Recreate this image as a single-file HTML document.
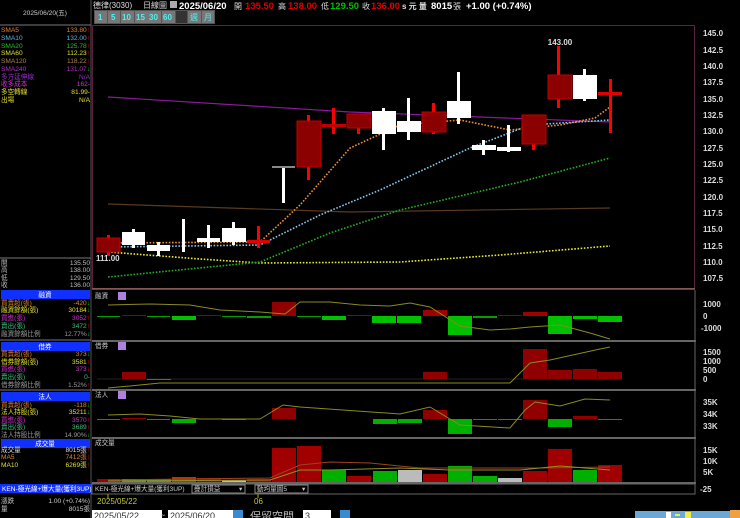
<!DOCTYPE html>
<html><head><meta charset="utf-8"><style>
html,body{margin:0;padding:0;background:#000;width:740px;height:518px;overflow:hidden}
svg{display:block}
text{font-family:"Liberation Sans","Noto Sans CJK TC",sans-serif}
.s{font-size:6.6px}
.a{font-size:8px;fill:#ddd;font-weight:bold}
</style></head><body>
<svg width="740" height="518" viewBox="0 0 740 518" xmlns="http://www.w3.org/2000/svg">
<rect width="740" height="518" fill="#000"/>
<g font-weight="bold" font-size="8">
<text x="93" y="8" fill="#ddd" font-weight="normal">德律(3030)</text>
<text x="143" y="8" fill="#ddd" font-weight="normal">日線圖</text>
<rect x="170" y="1" width="7" height="7" fill="#aaa"/>
<text x="179" y="9" fill="#fff" font-size="9.5">2025/06/20</text>
<text x="234" y="9" fill="#ddd" font-weight="normal">開</text>
<text x="245" y="9" fill="#e00000" font-size="9.5">135.50</text>
<text x="278" y="9" fill="#ddd" font-weight="normal">高</text>
<text x="288" y="9" fill="#e00000" font-size="9.5">138.00</text>
<text x="321" y="9" fill="#ddd" font-weight="normal">低</text>
<text x="330" y="9" fill="#00c000" font-size="9.5">129.50</text>
<text x="362" y="9" fill="#ddd" font-weight="normal">收</text>
<text x="371" y="9" fill="#e00000" font-size="9.5">136.00</text>
<text x="402" y="9" fill="#ddd">s 元  量</text>
<text x="431" y="9" fill="#fff" font-size="9.5">8015</text>
<text x="453" y="9" fill="#ddd" font-weight="normal">張</text>
<text x="466" y="9" fill="#fff" font-size="9.5">+1.00 (+0.74%)</text>
</g>
<rect x="94" y="10" width="121" height="14" fill="#555"/>
<g font-size="8" fill="#5ee" font-weight="bold">
<rect x="95" y="11" width="12" height="12" fill="#777"/><text x="98" y="20">1</text>
<rect x="108" y="11" width="12" height="12" fill="#777"/><text x="111" y="20">5</text>
<rect x="121" y="11" width="13" height="12" fill="#777"/><text x="122" y="20">10</text>
<rect x="135" y="11" width="13" height="12" fill="#777"/><text x="136" y="20">15</text>
<rect x="148" y="11" width="13" height="12" fill="#777"/><text x="149" y="20">30</text>
<rect x="162" y="11" width="13" height="12" fill="#777"/><text x="163" y="20">60</text>
<rect x="176" y="11" width="11" height="12" fill="#333"/>
<rect x="188" y="11" width="13" height="12" fill="#777"/><text x="190" y="20" font-weight="normal">週</text>
<rect x="202" y="11" width="12" height="12" fill="#777"/><text x="204" y="20" font-weight="normal">月</text>
</g>
<line x1="91" y1="0" x2="91" y2="518" stroke="#555"/>
<text x="45" y="15" class="s" fill="#ccc" text-anchor="middle">2025/06/20(五)</text>
<line x1="0" y1="25" x2="91" y2="25" stroke="#777"/>
<g class="s">
<text x="1" y="32" fill="#e08030">SMA5</text><text x="90" y="32" fill="#e08030" text-anchor="end">133.80<tspan fill="#f00">↑</tspan></text>
<text x="1" y="40" fill="#60b0e0">SMA10</text><text x="90" y="40" fill="#60b0e0" text-anchor="end">132.00<tspan fill="#f00">↑</tspan></text>
<text x="1" y="48" fill="#20c020">SMA20</text><text x="90" y="48" fill="#20c020" text-anchor="end">125.78<tspan fill="#f00">↑</tspan></text>
<text x="1" y="55" fill="#e0e030">SMA60</text><text x="90" y="55" fill="#e0e030" text-anchor="end">112.23<tspan fill="#f00">↑</tspan></text>
<text x="1" y="63" fill="#b08050">SMA120</text><text x="90" y="63" fill="#b08050" text-anchor="end">118.22<tspan fill="#f00">↑</tspan></text>
<text x="1" y="71" fill="#b030c0">SMA240</text><text x="90" y="71" fill="#b030c0" text-anchor="end">131.07<tspan fill="#0c0">↓</tspan></text>
<text x="1" y="79" fill="#9030c0">多方延伸線</text><text x="90" y="79" fill="#9030c0" text-anchor="end">N/A</text>
<text x="1" y="86" fill="#d030d0">收多成本</text><text x="90" y="86" fill="#d030d0" text-anchor="end">162-</text>
<text x="1" y="94" fill="#e0e030">多空轉線</text><text x="90" y="94" fill="#e0e030" text-anchor="end">81.99-</text>
<text x="1" y="102" fill="#e0e030">出場</text><text x="90" y="102" fill="#e0e030" text-anchor="end">N/A</text>
</g>
<line x1="0" y1="258" x2="91" y2="258" stroke="#777"/>
<g class="s" fill="#bbb">
<text x="1" y="265">開</text><text x="90" y="265" text-anchor="end">135.50</text>
<text x="1" y="272">高</text><text x="90" y="272" text-anchor="end">138.00</text>
<text x="1" y="280">低</text><text x="90" y="280" text-anchor="end">129.50</text>
<text x="1" y="287">收</text><text x="90" y="287" text-anchor="end">136.00</text>
</g>
<g class="s">
<rect x="1" y="290" width="89" height="9" fill="#1030ff"/><text x="45" y="297" fill="#fff" text-anchor="middle">融資</text>
<text x="1" y="305" fill="#e08030">買賣超(張)</text><text x="90" y="305" fill="#e08030" text-anchor="end">-420<tspan fill="#0c0">↓</tspan></text>
<text x="1" y="312" fill="#e0e030">融資餘額(張)</text><text x="90" y="312" fill="#e0e030" text-anchor="end">30184<tspan fill="#0c0">↓</tspan></text>
<text x="1" y="320" fill="#d030d0">買進(張)</text><text x="90" y="320" fill="#d030d0" text-anchor="end">3052<tspan fill="#f00">↑</tspan></text>
<text x="1" y="328" fill="#40c080">賣出(張)</text><text x="90" y="328" fill="#40c080" text-anchor="end">3472<tspan fill="#f00">↑</tspan></text>
<text x="1" y="336" fill="#999">融資餘額比例</text><text x="90" y="336" fill="#999" text-anchor="end">12.77%<tspan fill="#0c0">↓</tspan></text>
<line x1="0" y1="340" x2="91" y2="340" stroke="#777"/>
<rect x="1" y="342" width="89" height="9" fill="#1030ff"/><text x="45" y="349" fill="#fff" text-anchor="middle">借券</text>
<text x="1" y="356" fill="#e08030">買賣超(張)</text><text x="90" y="356" fill="#e08030" text-anchor="end">373<tspan fill="#0c0">↓</tspan></text>
<text x="1" y="364" fill="#e0e030">借券餘額(張)</text><text x="90" y="364" fill="#e0e030" text-anchor="end">3581<tspan fill="#f00">↑</tspan></text>
<text x="1" y="371" fill="#d030d0">買進(張)</text><text x="90" y="371" fill="#d030d0" text-anchor="end">373<tspan fill="#f00">↓</tspan></text>
<text x="1" y="379" fill="#40c080">賣出(張)</text><text x="90" y="379" fill="#40c080" text-anchor="end">0-</text>
<text x="1" y="387" fill="#999">借券餘額比例</text><text x="90" y="387" fill="#999" text-anchor="end">1.52%<tspan fill="#f00">↑</tspan></text>
<line x1="0" y1="390" x2="91" y2="390" stroke="#777"/>
<rect x="1" y="392" width="89" height="9" fill="#1030ff"/><text x="45" y="399" fill="#fff" text-anchor="middle">法人</text>
<text x="1" y="407" fill="#e08030">買賣超(張)</text><text x="90" y="407" fill="#e08030" text-anchor="end">-118<tspan fill="#0c0">↓</tspan></text>
<text x="1" y="414" fill="#e0e030">法人持股(張)</text><text x="90" y="414" fill="#e0e030" text-anchor="end">35211<tspan fill="#0c0">↓</tspan></text>
<text x="1" y="422" fill="#d030d0">買進(張)</text><text x="90" y="422" fill="#d030d0" text-anchor="end">3570<tspan fill="#f00">↑</tspan></text>
<text x="1" y="429" fill="#40c080">賣出(張)</text><text x="90" y="429" fill="#40c080" text-anchor="end">3689<tspan fill="#f00">↑</tspan></text>
<text x="1" y="437" fill="#999">法人持股比例</text><text x="90" y="437" fill="#999" text-anchor="end">14.90%<tspan fill="#0c0">↓</tspan></text>
<rect x="1" y="439" width="89" height="9" fill="#1030ff"/><text x="45" y="446" fill="#fff" text-anchor="middle">成交量</text>
<text x="1" y="452" fill="#ddd">成交量</text><text x="90" y="452" fill="#ddd" text-anchor="end">8015張<tspan fill="#f00">↑</tspan></text>
<text x="1" y="459" fill="#e08030">MA5</text><text x="90" y="459" fill="#e08030" text-anchor="end">7412張<tspan fill="#f00">↑</tspan></text>
<text x="1" y="467" fill="#e0e030">MA10</text><text x="90" y="467" fill="#e0e030" text-anchor="end">6269張<tspan fill="#f00">↑</tspan></text>
<rect x="0" y="484" width="91" height="9" fill="#1030ff"/><text x="2" y="491" fill="#fff">KEN-極光線+爆大量(獲利3UP)</text>
<text x="1" y="503" fill="#ccc">漲跌</text><text x="90" y="503" fill="#ccc" text-anchor="end">1.00 (+0.74%)</text>
<text x="1" y="511" fill="#ccc">量</text><text x="90" y="511" fill="#ccc" text-anchor="end">8015張</text>
</g>
<rect x="92.5" y="25.5" width="602" height="263" fill="none" stroke="#5a2040"/>
<line x1="92" y1="289" x2="695" y2="289" stroke="#b09070"/>
<g fill="none" stroke="#666" stroke-width="2">
<line x1="92" y1="341" x2="696" y2="341"/><line x1="92" y1="390" x2="696" y2="390"/>
<line x1="92" y1="438" x2="696" y2="438"/><line x1="92" y1="483" x2="696" y2="483"/>
</g>
<line x1="695" y1="290" x2="695" y2="494" stroke="#666"/>
<g class="a">
<text x="703" y="36">145.0</text><text x="703" y="53">142.5</text><text x="703" y="69">140.0</text><text x="703" y="85">137.5</text>
<text x="703" y="102">135.0</text><text x="703" y="118">132.5</text><text x="703" y="134">130.0</text><text x="703" y="151">127.5</text>
<text x="703" y="167">125.0</text><text x="703" y="183">122.5</text><text x="703" y="200">120.0</text><text x="703" y="216">117.5</text>
<text x="703" y="232">115.0</text><text x="703" y="249">112.5</text><text x="703" y="265">110.0</text><text x="703" y="281">107.5</text>
<text x="703" y="307">1000</text><text x="703" y="319">0</text><text x="701" y="331">-1000</text>
<text x="703" y="355">1500</text><text x="703" y="364">1000</text><text x="703" y="373">500</text><text x="703" y="382">0</text>
<text x="703" y="405">35K</text><text x="703" y="417">34K</text><text x="703" y="429">33K</text>
<text x="703" y="453">15K</text><text x="703" y="464">10K</text><text x="703" y="475">5K</text><text x="700" y="492">-25</text>
</g>
<polyline points="108,97 350,112 610,122" fill="none" stroke="#8a1a9a" stroke-width="1.2"/>
<polyline points="108,204 350,212 610,208" fill="none" stroke="#5a3a20" stroke-width="1.2"/>
<g fill="none" stroke-width="1.6" stroke-dasharray="1.6,1.6">
<polyline points="108,252 200,259 260,263 400,262 500,255 610,246" stroke="#e8e830"/>
<polyline points="108,277 260,262 330,233 400,210 520,182 610,158" stroke="#20b020"/>
<polyline points="108,247 260,245 320,215 380,190 470,148 530,125 610,120" stroke="#80c8f0"/>
<polyline points="108,243 260,242 300,205 350,148 400,125 460,120 510,130 560,125 595,118 610,107" stroke="#f09030"/>
</g>
<g>
<rect x="107" y="235" width="3" height="21" fill="#f00"/><rect x="97" y="238" width="23" height="14" fill="#8b0000" stroke="#c00000"/>
<rect x="132" y="229" width="3" height="19" fill="#fff"/><rect x="122" y="232" width="23" height="13" fill="#fff"/>
<rect x="157" y="242" width="3" height="14" fill="#fff"/><rect x="147" y="245" width="23" height="6" fill="#fff"/>
<rect x="182" y="219" width="3" height="33" fill="#fff"/>
<rect x="207" y="225" width="3" height="23" fill="#fff"/><rect x="197" y="238" width="23" height="4" fill="#fff"/>
<rect x="232" y="222" width="3" height="23" fill="#fff"/><rect x="222" y="228" width="24" height="14" fill="#fff"/>
<rect x="257" y="226" width="3" height="22" fill="#f00"/><rect x="247" y="240" width="23" height="3" fill="#e00000"/>
<rect x="282" y="167" width="3" height="36" fill="#fff"/><rect x="272" y="166" width="23" height="2" fill="#888"/>
<rect x="307" y="115" width="3" height="65" fill="#f00"/><rect x="297" y="121" width="24" height="46" fill="#8b0000" stroke="#c00000"/>
<rect x="332" y="108" width="3" height="26" fill="#f00"/><rect x="322" y="124" width="24" height="3" fill="#c00000"/>
<rect x="357" y="114" width="3" height="20" fill="#f00"/><rect x="347" y="114" width="24" height="14" fill="#8b0000" stroke="#c00000"/>
<rect x="382" y="108" width="3" height="42" fill="#fff"/><rect x="372" y="111" width="24" height="23" fill="#fff"/>
<rect x="407" y="98" width="3" height="42" fill="#fff"/><rect x="397" y="121" width="24" height="11" fill="#fff"/>
<rect x="432" y="103" width="3" height="31" fill="#f00"/><rect x="422" y="112" width="24" height="20" fill="#8b0000" stroke="#c00000"/>
<rect x="457" y="72" width="3" height="52" fill="#fff"/><rect x="447" y="101" width="24" height="17" fill="#fff"/>
<rect x="482" y="140" width="3" height="15" fill="#fff"/><rect x="472" y="145" width="24" height="5" fill="#fff"/>
<rect x="507" y="125" width="3" height="27" fill="#fff"/><rect x="497" y="147" width="24" height="4" fill="#fff"/>
<rect x="532" y="115" width="3" height="35" fill="#f00"/><rect x="522" y="115" width="24" height="29" fill="#8b0000" stroke="#c00000"/>
<rect x="557" y="46" width="3" height="62" fill="#f00"/><rect x="548" y="75" width="24" height="24" fill="#8b0000" stroke="#c00000"/>
<rect x="583" y="69" width="3" height="32" fill="#fff"/><rect x="573" y="75" width="24" height="24" fill="#fff"/>
<rect x="609" y="79" width="3" height="54" fill="#f00"/><rect x="598" y="92" width="24" height="3" fill="#e00000"/>
</g>
<text x="560" y="45" class="a" fill="#fff" text-anchor="middle">143.00</text>
<text x="96" y="261" class="a" fill="#fff">111.00</text>
<text x="95" y="298" class="s" fill="#ccc">融資</text><rect x="118" y="292" width="8" height="8" fill="#b080e0"/>
<g fill="#00a000">
<rect x="97" y="316" width="23" height="1"/><rect x="147" y="316" width="23" height="1"/><rect x="172" y="316" width="24" height="4" fill="#00c000"/>
<rect x="222" y="316" width="24" height="1"/><rect x="247" y="316" width="24" height="2"/><rect x="297" y="316" width="24" height="1"/>
<rect x="322" y="316" width="24" height="4" fill="#00c000"/><rect x="372" y="316" width="24" height="7" fill="#00c000"/><rect x="397" y="316" width="24" height="7" fill="#00c000"/>
<rect x="448" y="316" width="24" height="19" fill="#00c000"/><rect x="473" y="316" width="24" height="2"/><rect x="548" y="316" width="24" height="18" fill="#00c000"/>
<rect x="573" y="316" width="24" height="3" fill="#00c000"/><rect x="598" y="316" width="24" height="6" fill="#00c000"/>
</g>
<g fill="#8b0000">
<rect x="122" y="315" width="24" height="1"/><rect x="197" y="315" width="24" height="1"/><rect x="272" y="302" width="24" height="14" fill="#900000"/>
<rect x="347" y="315" width="24" height="1"/><rect x="423" y="310" width="24" height="6" fill="#a00000"/><rect x="498" y="315" width="24" height="1"/>
<rect x="523" y="312" width="24" height="4" fill="#a00000"/>
</g>
<polyline points="108,305 150,304 190,305 220,310 260,312 285,314 300,302 330,302 360,305 390,306 410,303 430,307 460,326 490,330 510,329 530,327 560,325 590,333 610,339" fill="none" stroke="#8a8a20"/>
<text x="95" y="348" class="s" fill="#ccc">借券</text><rect x="118" y="342" width="8" height="8" fill="#b080e0"/>
<line x1="97" y1="379" x2="622" y2="379" stroke="#222"/>
<rect x="122" y="372" width="24" height="7" fill="#900000"/><rect x="147" y="379" width="24" height="1" fill="#00a000"/>
<rect x="423" y="372" width="24" height="7" fill="#900000"/><rect x="523" y="349" width="24" height="30" fill="#900000"/>
<rect x="548" y="370" width="24" height="9" fill="#900000"/><rect x="573" y="369" width="24" height="10" fill="#900000"/><rect x="598" y="372" width="24" height="7" fill="#900000"/>
<polyline points="108,388 130,386 160,383 510,383 530,363 550,360 600,349 610,347" fill="none" stroke="#8a8a20"/>
<text x="95" y="397" class="s" fill="#ccc">法人</text><rect x="118" y="391" width="8" height="8" fill="#b080e0"/>
<g fill="#00a000">
<rect x="97" y="419" width="23" height="1"/><rect x="147" y="419" width="23" height="1"/><rect x="172" y="419" width="24" height="4" fill="#00b000"/>
<rect x="222" y="419" width="24" height="1"/><rect x="373" y="419" width="24" height="5" fill="#00b000"/><rect x="398" y="419" width="24" height="4" fill="#00b000"/>
<rect x="448" y="419" width="24" height="15" fill="#00b000"/><rect x="473" y="419" width="24" height="1"/><rect x="498" y="419" width="24" height="1"/>
<rect x="548" y="419" width="24" height="8" fill="#00b000"/><rect x="598" y="419" width="24" height="1"/>
</g>
<rect x="122" y="418" width="24" height="1" fill="#900000"/><rect x="272" y="408" width="24" height="11" fill="#900000"/>
<rect x="423" y="410" width="24" height="9" fill="#900000"/><rect x="523" y="400" width="24" height="19" fill="#900000"/><rect x="573" y="416" width="24" height="3" fill="#900000"/>
<polyline points="108,415 140,414 170,416 200,419 260,419 283,405 300,407 400,414 430,407 460,425 510,428 525,410 535,402 560,406 585,399 610,400" fill="none" stroke="#8a8a20"/>
<text x="95" y="445" class="s" fill="#ccc">成交量</text>
<g>
<rect x="97" y="479" width="23" height="3" fill="#a00000"/><rect x="122" y="479" width="24" height="3" fill="#40a040"/><rect x="147" y="479" width="24" height="3" fill="#40a040"/>
<rect x="172" y="477" width="24" height="5" fill="#c03000"/><rect x="197" y="478" width="24" height="4" fill="#a00000"/><rect x="222" y="480" width="24" height="2" fill="#bbb"/>
<rect x="247" y="479" width="24" height="3" fill="#a00000"/><rect x="272" y="448" width="24" height="34" fill="#a00000"/><rect x="297" y="446" width="24" height="36" fill="#a00000"/>
<rect x="322" y="470" width="24" height="12" fill="#00b000"/><rect x="347" y="476" width="24" height="6" fill="#a00000"/><rect x="373" y="471" width="24" height="11" fill="#00b000"/>
<rect x="398" y="470" width="24" height="12" fill="#bbb"/><rect x="423" y="474" width="24" height="8" fill="#a00000"/><rect x="448" y="466" width="24" height="16" fill="#00b000"/>
<rect x="473" y="476" width="24" height="6" fill="#00b000"/><rect x="498" y="478" width="24" height="4" fill="#bbb"/><rect x="523" y="471" width="24" height="11" fill="#a00000"/>
<rect x="548" y="449" width="24" height="33" fill="#a00000"/><rect x="573" y="470" width="24" height="12" fill="#00b000"/><rect x="598" y="465" width="24" height="17" fill="#a00000"/>
</g>
<polyline points="108,480 270,478 300,465 330,462 370,463 420,468 480,468 540,468 610,467" fill="none" stroke="#a04020"/>
<polyline points="108,481 270,480 300,470 330,470 400,468 450,470 520,470 560,466 610,470" fill="none" stroke="#909020"/>
<rect x="92" y="484" width="603" height="10" fill="#000" stroke="#666"/>
<text x="95" y="491" class="s" fill="#ccc">KEN-極光線+爆大量(獲利3UP)</text>
<rect x="192" y="485" width="53" height="8" fill="#000" stroke="#888"/><text x="194" y="491" class="s" fill="#ccc">疊計損益</text><text x="239" y="491" class="s" fill="#ccc">▾</text>
<rect x="255" y="485" width="53" height="8" fill="#000" stroke="#888"/><text x="257" y="491" class="s" fill="#ccc">動均量圖5</text><text x="302" y="491" class="s" fill="#ccc">▾</text>
<line x1="108" y1="494" x2="108" y2="498" stroke="#aa0"/><line x1="258" y1="494" x2="258" y2="498" stroke="#aa0"/>
<text x="97" y="504" font-size="8" fill="#c8c830">2025/05/22</text>
<text x="254" y="504" font-size="8" fill="#c8c830">06</text>
<rect x="92" y="510" width="70" height="10" fill="#fff"/><text x="94" y="519" font-size="9" fill="#333">2025/05/22</text>
<text x="160" y="518" font-size="9" fill="#ccc">~</text>
<rect x="168" y="510" width="66" height="10" fill="#fff"/><text x="170" y="519" font-size="9" fill="#333">2025/06/20</text>
<rect x="233" y="510" width="10" height="10" fill="#3a8ad0"/>
<text x="250" y="520" font-size="11" fill="#bbb">保留空間</text>
<rect x="303" y="510" width="28" height="10" fill="#fff"/><text x="305" y="519" font-size="9" fill="#333">3</text>
<rect x="340" y="510" width="10" height="10" fill="#3a8ad0"/>
<rect x="635" y="511" width="105" height="9" fill="#6aa8d8"/>
<rect x="666" y="512" width="5" height="6" fill="#fff"/><rect x="675" y="514" width="5" height="2" fill="#ee4"/><rect x="685" y="512" width="6" height="6" fill="#ee4"/>
<rect x="730" y="510" width="10" height="8" fill="#f0a040"/>
</svg>
</body></html>
